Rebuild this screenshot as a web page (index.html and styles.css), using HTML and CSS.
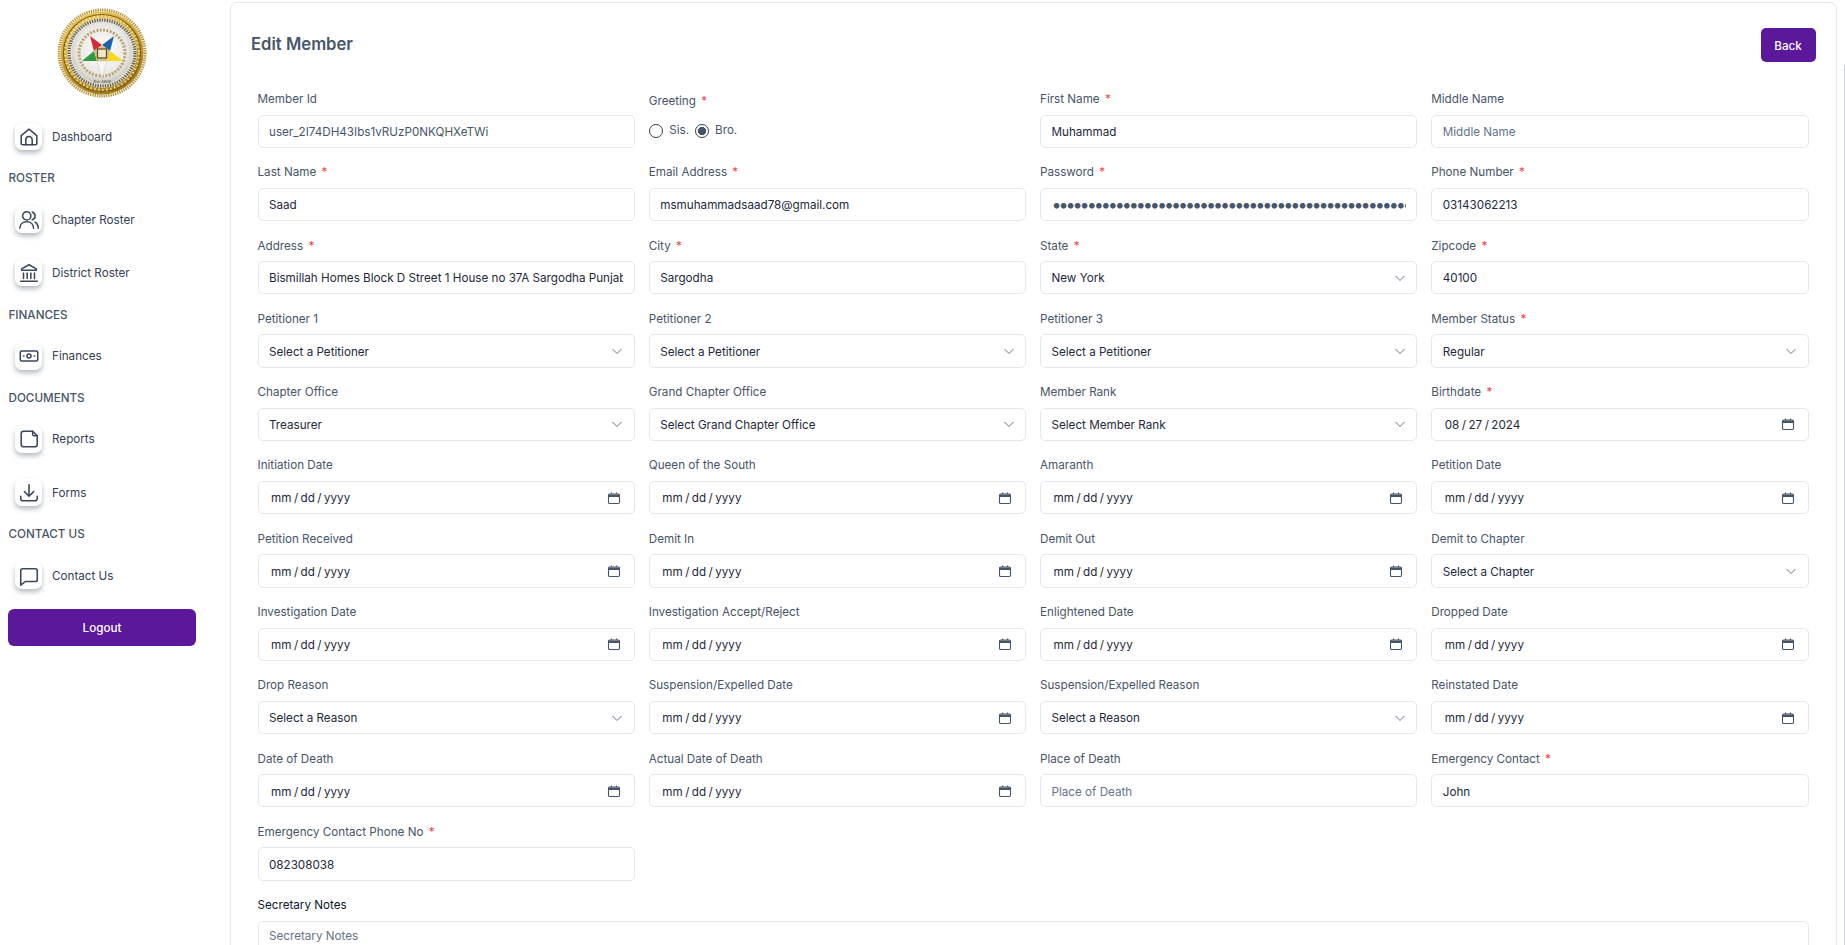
FILE: index.html
```html
<!DOCTYPE html>
<html>
<head>
    <title>Edit Member</title>
    <link rel="stylesheet" href="styles.css">
</head>
<body>
    <div class="sidebar">
        <div class="logo">
            <svg width="90" height="90" viewBox="0 0 90 90">
                <defs>
                    <radialGradient id="gold" cx="42%" cy="30%" r="80%">
                        <stop offset="0" stop-color="#f9e48f"/>
                        <stop offset="0.55" stop-color="#d7ae3d"/>
                        <stop offset="1" stop-color="#8a6414"/>
                    </radialGradient>
                    <radialGradient id="silver" cx="50%" cy="45%" r="60%">
                        <stop offset="0" stop-color="#ffffff"/>
                        <stop offset="0.7" stop-color="#e8e7e3"/>
                        <stop offset="1" stop-color="#b9b7b0"/>
                    </radialGradient>
                </defs>
                <circle cx="45" cy="45" r="43" fill="none" stroke="#b88f2b" stroke-width="3" stroke-dasharray="1.3 1"/>
                <circle cx="45" cy="45" r="41.500" fill="url(#gold)"/>
                <circle cx="45" cy="45" r="38.500" fill="none" stroke="#7d5c14" stroke-width="1.200"/>
                <circle cx="45" cy="45" r="36.800" fill="none" stroke="#f5dd85" stroke-width="2.200" stroke-dasharray="1.500 2.500"/>
                <circle cx="45" cy="45" r="35" fill="#e9e5d6"/>
                <circle cx="45" cy="45" r="33" fill="none" stroke="#4a4130" stroke-width="3.200" stroke-dasharray="1.400 1.100" opacity="0.8"/>
                <circle cx="45" cy="45" r="30.500" fill="url(#silver)"/>
                <circle cx="45" cy="45" r="23" fill="none" stroke="#a98d4d" stroke-width="3" stroke-dasharray="2 1.400" opacity="0.75"/>
                <polygon points="33,28 45,37 37,43" fill="#d92b35"/>
                <polygon points="57,28 45,37 53,43" fill="#1f62ad"/>
                <polygon points="25,53 37,43 40,53" fill="#2e9a3f"/>
                <polygon points="66,53 53,43 50,53" fill="#f4d91d"/>
                <polygon points="45,70 40,53 50,53" fill="#f6f6f4" stroke="#b9b7ae" stroke-width="0.400"/>
                <polygon points="45,37 53,43 50,53 40,53 37,43" fill="#d9c083"/>
                <rect x="40.500" y="41" width="9" height="9" fill="#f0e6c4" stroke="#5a4a22" stroke-width="1.200"/>
                <text x="45" y="75" class="logo-est">Est 1850</text>
            </svg>
        </div>

        <a class="nav-item">
            <span class="nav-icon">
                <svg viewBox="0 0 24 24"><path d="M3.500 10.500 12 3.500l8.500 7V19a1.500 1.500 0 0 1-1.500 1.500H5A1.500 1.500 0 0 1 3.500 19z"/><path d="M8.500 20.500V15a3.500 3.500 0 0 1 7 0v5.500"/></svg>
            </span>
            Dashboard
        </a>

        <div class="nav-title">ROSTER</div>
        <a class="nav-item">
            <span class="nav-icon">
                <svg viewBox="0 0 24 24"><circle cx="9.500" cy="7.500" r="4.500"/><path d="M2 21c0-4.500 3.200-7 7.500-7s7.500 2.500 7.500 7"/><path d="M15.500 3.200a4.500 4.500 0 0 1 0 8.600"/><path d="M18.500 14.500c2.200 1 3.500 3.300 3.500 6.500"/></svg>
            </span>
            Chapter Roster
        </a>
        <a class="nav-item">
            <span class="nav-icon">
                <svg viewBox="0 0 24 24"><path d="M12 3 4 7.500V9h16V7.500z"/><path d="M6 12v6M10 12v6M14 12v6M18 12v6"/><path d="M3 21h18"/></svg>
            </span>
            District Roster
        </a>

        <div class="nav-title">FINANCES</div>
        <a class="nav-item">
            <span class="nav-icon">
                <svg viewBox="0 0 24 24"><rect x="2.500" y="6.500" width="19" height="11" rx="1.500"/><circle cx="12" cy="12" r="2.200"/><path d="M6 12h.5M17.500 12h.5"/></svg>
            </span>
            Finances
        </a>

        <div class="nav-title">DOCUMENTS</div>
        <a class="nav-item">
            <span class="nav-icon">
                <svg viewBox="0 0 24 24"><path d="M6 3.500h10l5 5V18a2.500 2.500 0 0 1-2.500 2.500H6A2.500 2.500 0 0 1 3.500 18V6A2.500 2.500 0 0 1 6 3.500z"/><path d="M16 3.500V7a1.500 1.500 0 0 0 1.500 1.500H21"/></svg>
            </span>
            Reports
        </a>
        <a class="nav-item">
            <span class="nav-icon">
                <svg viewBox="0 0 24 24"><path d="M12 3v12M7 10.500l5 5 5-5"/><path d="M3 15.500V18a2.500 2.500 0 0 0 2.500 2.500h13A2.500 2.500 0 0 0 21 18v-2.500"/></svg>
            </span>
            Forms
        </a>

        <div class="nav-title">CONTACT US</div>
        <a class="nav-item">
            <span class="nav-icon">
                <svg viewBox="0 0 24 24"><path d="M5 4h14a2 2 0 0 1 2 2v10a2 2 0 0 1-2 2H8l-5 4V6a2 2 0 0 1 2-2z"/></svg>
            </span>
            Contact Us
        </a>

        <button class="logout">Logout</button>
    </div>

    <div class="main">
        <div class="card">
            <div class="card-head">
                <h2>Edit Member</h2>
                <button class="back">Back</button>
            </div>

            <div class="form-grid">
                <div class="field">
                    <label>Member Id</label>
                    <input type="text" class="muted" value="user_2I74DH43Ibs1vRUzP0NKQHXeTWi" disabled>
                </div>
                <div class="field">
                    <label class="greeting-label">Greeting <span class="req">*</span></label>
                    <div class="radios">
                        <input type="radio" name="greeting" id="sis"><label for="sis">Sis.</label>
                        <input type="radio" name="greeting" id="bro" checked><label for="bro">Bro.</label>
                    </div>
                </div>
                <div class="field">
                    <label>First Name <span class="req">*</span></label>
                    <input type="text" value="Muhammad">
                </div>
                <div class="field">
                    <label>Middle Name</label>
                    <input type="text" placeholder="Middle Name">
                </div>

                <div class="field">
                    <label>Last Name <span class="req">*</span></label>
                    <input type="text" value="Saad">
                </div>
                <div class="field">
                    <label>Email Address <span class="req">*</span></label>
                    <input type="text" value="msmuhammadsaad78@gmail.com">
                </div>
                <div class="field">
                    <label>Password <span class="req">*</span></label>
                    <input type="password" value="passwordpasswordpasswordpasswordpasswordpassword123">
                </div>
                <div class="field">
                    <label>Phone Number <span class="req">*</span></label>
                    <input type="text" value="03143062213">
                </div>

                <div class="field">
                    <label>Address <span class="req">*</span></label>
                    <input type="text" value="Bismillah Homes Block D Street 1 House no 37A Sargodha Punjab Pakistan">
                </div>
                <div class="field">
                    <label>City <span class="req">*</span></label>
                    <input type="text" value="Sargodha">
                </div>
                <div class="field">
                    <label>State <span class="req">*</span></label>
                    <select><option>New York</option></select>
                </div>
                <div class="field">
                    <label>Zipcode <span class="req">*</span></label>
                    <input type="text" value="40100">
                </div>

                <div class="field">
                    <label>Petitioner 1</label>
                    <select><option>Select a Petitioner</option></select>
                </div>
                <div class="field">
                    <label>Petitioner 2</label>
                    <select><option>Select a Petitioner</option></select>
                </div>
                <div class="field">
                    <label>Petitioner 3</label>
                    <select><option>Select a Petitioner</option></select>
                </div>
                <div class="field">
                    <label>Member Status <span class="req">*</span></label>
                    <select><option>Regular</option></select>
                </div>

                <div class="field">
                    <label>Chapter Office</label>
                    <select><option>Treasurer</option></select>
                </div>
                <div class="field">
                    <label>Grand Chapter Office</label>
                    <select><option>Select Grand Chapter Office</option></select>
                </div>
                <div class="field">
                    <label>Member Rank</label>
                    <select><option>Select Member Rank</option></select>
                </div>
                <div class="field">
                    <label>Birthdate <span class="req">*</span></label>
                    <input type="text" class="date" value="08 / 27 / 2024">
                </div>

                <div class="field">
                    <label>Initiation Date</label>
                    <input type="text" class="date" value="mm / dd / yyyy">
                </div>
                <div class="field">
                    <label>Queen of the South</label>
                    <input type="text" class="date" value="mm / dd / yyyy">
                </div>
                <div class="field">
                    <label>Amaranth</label>
                    <input type="text" class="date" value="mm / dd / yyyy">
                </div>
                <div class="field">
                    <label>Petition Date</label>
                    <input type="text" class="date" value="mm / dd / yyyy">
                </div>

                <div class="field">
                    <label>Petition Received</label>
                    <input type="text" class="date" value="mm / dd / yyyy">
                </div>
                <div class="field">
                    <label>Demit In</label>
                    <input type="text" class="date" value="mm / dd / yyyy">
                </div>
                <div class="field">
                    <label>Demit Out</label>
                    <input type="text" class="date" value="mm / dd / yyyy">
                </div>
                <div class="field">
                    <label>Demit to Chapter</label>
                    <select><option>Select a Chapter</option></select>
                </div>

                <div class="field">
                    <label>Investigation Date</label>
                    <input type="text" class="date" value="mm / dd / yyyy">
                </div>
                <div class="field">
                    <label>Investigation Accept/Reject</label>
                    <input type="text" class="date" value="mm / dd / yyyy">
                </div>
                <div class="field">
                    <label>Enlightened Date</label>
                    <input type="text" class="date" value="mm / dd / yyyy">
                </div>
                <div class="field">
                    <label>Dropped Date</label>
                    <input type="text" class="date" value="mm / dd / yyyy">
                </div>

                <div class="field">
                    <label>Drop Reason</label>
                    <select><option>Select a Reason</option></select>
                </div>
                <div class="field">
                    <label>Suspension/Expelled Date</label>
                    <input type="text" class="date" value="mm / dd / yyyy">
                </div>
                <div class="field">
                    <label>Suspension/Expelled Reason</label>
                    <select><option>Select a Reason</option></select>
                </div>
                <div class="field">
                    <label>Reinstated Date</label>
                    <input type="text" class="date" value="mm / dd / yyyy">
                </div>

                <div class="field">
                    <label>Date of Death</label>
                    <input type="text" class="date" value="mm / dd / yyyy">
                </div>
                <div class="field">
                    <label>Actual Date of Death</label>
                    <input type="text" class="date" value="mm / dd / yyyy">
                </div>
                <div class="field">
                    <label>Place of Death</label>
                    <input type="text" placeholder="Place of Death">
                </div>
                <div class="field">
                    <label>Emergency Contact <span class="req">*</span></label>
                    <input type="text" value="John">
                </div>

                <div class="field">
                    <label>Emergency Contact Phone No <span class="req">*</span></label>
                    <input type="text" value="082308038">
                </div>
            </div>

            <div class="notes">
                <label>Secretary Notes</label>
                <textarea rows="4" placeholder="Secretary Notes"></textarea>
            </div>
        </div>
    </div>

    <div class="scroll-line"></div>
</body>
</html>
```

FILE: styles.css
```css
* { box-sizing: border-box; }
html, body { height: 945px; overflow: hidden; }
body { margin: 0; display: flex; font-family: Inter, "Liberation Sans", sans-serif; font-size: 11.67px; background: #fff; color: #334155; }

.sidebar { width: 230px; flex-shrink: 0; padding: 8px 34px 0 8px; }
.logo { display: flex; justify-content: center; height: 102px; }
.logo-est { font-family: "Liberation Serif", serif; font-style: italic; font-size: 5px; text-anchor: middle; fill: #333; }
.nav-item { display: flex; align-items: center; gap: 10px; height: 53.200px; padding-left: 7px; color: #334155; }
.nav-icon { width: 27px; height: 27px; background: #fff; border-radius: 7px; box-shadow: 0 3px 5px rgba(71, 85, 105, 0.4); display: flex; align-items: center; justify-content: center; }
.nav-icon svg { width: 22px; height: 22px; fill: none; stroke: #3b475c; stroke-width: 1.700; stroke-linecap: round; stroke-linejoin: round; }
.nav-title { height: 30px; line-height: 30px; font-weight: 500; color: #475569; padding-left: 0.500px; }
.logout { display: block; width: 188px; height: 37px; margin-top: 7px; background: #5b189a; color: #fff; border: none; border-radius: 6px; font: 500 11.67px Inter, sans-serif; }

.main { flex: 1; min-width: 0; padding: 2px 8.500px 0 0; }
.card { background: #fff; border: 1px solid #e2e8f0; border-radius: 7px; padding: 25px 20px 20px; }
.card-head { display: flex; justify-content: space-between; align-items: flex-start; height: 34px; margin-bottom: 28px; }
h2 { margin: 0; padding-top: 5.500px; font-size: 16.670px; line-height: 21px; font-weight: 600; color: #475569; }
.back { width: 55px; height: 34px; padding-top: 2px; background: #5b189a; color: #fff; border: none; border-radius: 5px; font: 500 11.67px Inter, sans-serif; }

.form-grid { display: grid; grid-template-columns: repeat(4, 1fr); column-gap: 14px; row-gap: 15.550px; padding: 0 7px 0 6.500px; }
.field { display: flex; flex-direction: column; gap: 6px; min-width: 0; }
label { padding-top: 1px; line-height: 17.500px; color: #475569; }
.req { color: #ef4444; margin-left: 2px; }
.greeting-label { padding-top: 3px; }

input[type=text], input[type=password], select, textarea { width: 100%; height: 33.250px; padding: 1.500px 10.500px 0; background-color: #fff; border: 1px solid #e2e8f0; border-radius: 5px; font: 11.67px Inter, sans-serif; color: #1e293b; outline: none; }
input::placeholder, textarea::placeholder { color: #64748b; opacity: 1; }
.muted { color: #475569 !important; }
select { appearance: none; background-image: url("data:image/svg+xml,%3Csvg xmlns='http://www.w3.org/2000/svg' width='12' height='12' viewBox='0 0 12 12'%3E%3Cpath d='M1.500 4l4.500 4.500L10.500 4' fill='none' stroke='%2364748b' stroke-width='1'/%3E%3C/svg%3E"); background-repeat: no-repeat; background-position: right 10.500px center; }
.date { padding-left: 12.500px !important; word-spacing: -0.800px; background-image: url("data:image/svg+xml,%3Csvg xmlns='http://www.w3.org/2000/svg' width='14' height='14' viewBox='0 0 14 14'%3E%3Crect x='1.500' y='3' width='11' height='9.500' rx='1.200' fill='none' stroke='%23475569' stroke-width='1.100'/%3E%3Cpath d='M1.500 3.500h11V6h-11z' fill='%23475569'/%3E%3Cpath d='M4.500 1.500V3M9.500 1.500V3' stroke='%23475569' stroke-width='1.100'/%3E%3C/svg%3E"); background-repeat: no-repeat; background-position: right 13px center; }
input[type=password] { font-size: 18px; letter-spacing: -3.100px; padding-top: 0; color: #475569; }

.radios { display: flex; align-items: center; height: 15px; margin-top: 6.500px; }
.radios label { padding-top: 0; color: #475569; margin-left: 6.500px; margin-right: 5.500px; }
input[type=radio] { appearance: none; margin: 0; width: 14px; height: 14px; border: 1.300px solid #334155; border-radius: 50%; background: #fff; }
input[type=radio]:checked { background: radial-gradient(circle, #475569 0 3.900px, #fff 4.400px); }

.notes { margin-top: 15.500px; padding: 0 7px 0 6.500px; }
.notes label { display: block; color: #0f172a; margin-bottom: 6px; }
.notes textarea { height: 80px; padding-top: 7px; resize: none; display: block; }

.scroll-line { position: fixed; left: 1844px; top: 65px; width: 1px; height: 880px; background: #cbd5e1; }
```
